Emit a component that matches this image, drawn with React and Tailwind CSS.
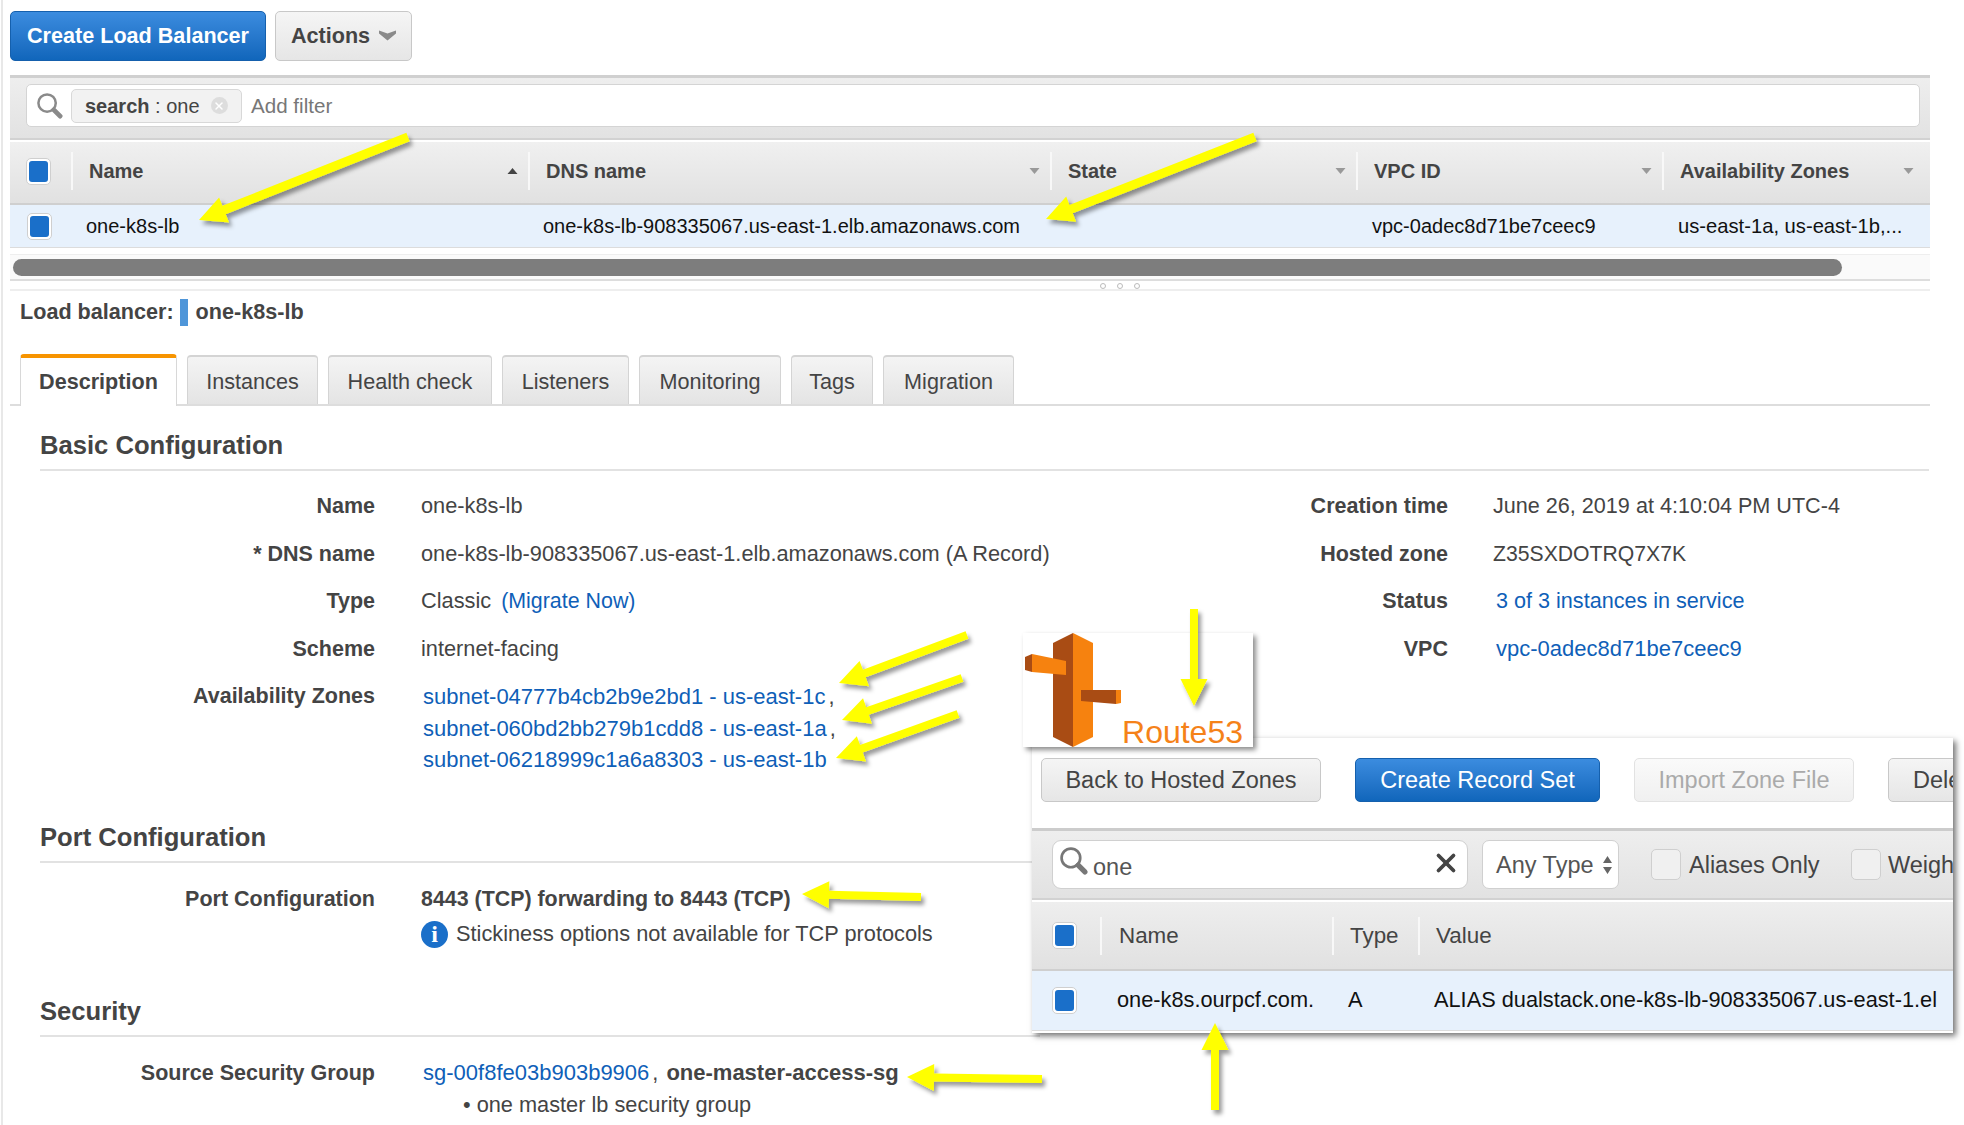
import { X } from 'lucide-react'

const font = { fontFamily: '"Liberation Sans", Arial, sans-serif' }

function Check() {
  return (
    <span className="flex h-[27px] w-[25px] shrink-0 items-center justify-center rounded-[5px] border border-[#cfcfcf] bg-white">
      <span className="h-[21px] w-[19px] rounded-[3px] bg-[#1a6fc9]" />
    </span>
  )
}

function Caret({ up, dark }) {
  return (
    <svg width="11" height="8" viewBox="0 0 11 8" className="shrink-0">
      <path d={up ? 'M5.5 1 10.5 7H.5z' : 'M.5 1h10l-5 6z'} fill={dark ? '#444' : '#999'} />
    </svg>
  )
}

function Magnifier({ size, color = '#8a8a8a' }) {
  return (
    <svg width={size} height={size} viewBox="0 0 28 28" className="shrink-0">
      <circle cx="11.5" cy="11.5" r="9" fill="none" stroke={color} strokeWidth="2.6" />
      <path d="M18.5 18.5 25 25" stroke={color} strokeWidth="5" strokeLinecap="round" />
    </svg>
  )
}

const columns = [
  { label: 'Name', w: 'w-[457px]', caret: 'up' },
  { label: 'DNS name', w: 'w-[522px]' },
  { label: 'State', w: 'w-[306px]' },
  { label: 'VPC ID', w: 'w-[306px]' },
  { label: 'Availability Zones', w: 'w-[262px]' },
]

function Toolbar() {
  return (
    <div className="flex gap-[9px]">
      <button className="h-[50px] w-[256px] rounded-[5px] border border-[#1560ad] bg-linear-to-b from-[#3b8cdf] to-[#1066bb] pt-[1px] text-[21.6px] font-bold text-white">
        Create Load Balancer
      </button>
      <button className="flex h-[50px] w-[137px] items-center justify-center gap-[9px] rounded-[5px] border border-[#c8c8c8] bg-linear-to-b from-[#f5f5f5] to-[#e6e6e6] pt-[1px] text-[21.6px] font-bold text-[#444]">
        Actions
        <svg width="17" height="11" viewBox="0 0 17 11" className="mb-[3px]">
          <path d="M0 .5 8.5 3.5 17 .5V3.5L8.5 10.5 0 3.5z" fill="#8a8a8a" />
        </svg>
      </button>
    </div>
  )
}

function FilterBar() {
  return (
    <div className="mt-[14px] h-[65px] border-t-[3px] border-b-[2px] border-t-[#d0d0d0] border-b-[#d2d2d2] bg-linear-to-b from-[#eeeeee] to-[#e2e2e2] px-[16px] pt-[6px]">
      <div className="flex h-[43px] w-[1894px] items-center rounded-[5px] border border-[#d4d4d4] bg-white pl-[9px]">
        <Magnifier size={27} />
        <span className="ml-[8px] flex h-[34px] w-[171px] items-center rounded-[5px] border border-[#d8d8d8] bg-[#f2f2f2] pl-[13px] text-[20px] text-[#444]">
          <b>search</b>&nbsp;: one
          <span className="ml-[11px] flex h-[17px] w-[17px] items-center justify-center rounded-full bg-[#dddddd]">
            <X className="h-[12px] w-[12px] text-white" strokeWidth={3} />
          </span>
        </span>
        <span className="ml-[9px] mt-[1px] text-[20.6px] text-[#777]">Add filter</span>
      </div>
    </div>
  )
}

function LbTable() {
  return (
    <div>
      <div className="flex h-[65px] items-center border-t-[2px] border-b-[2px] border-t-white border-b-[#cfcfcf] bg-linear-to-b from-[#f0f0f0] to-[#e1e1e1] pb-[3px] pl-[16px] text-[20px] font-bold text-[#444]">
        <span className="w-[45px]"><Check /></span>
        {columns.map(c => (
          <div key={c.label} className={`flex h-[38px] ${c.w} shrink-0 items-center justify-between border-l-2 border-[#f8f8f8] pl-[16px] pr-[10px]`}>
            {c.label}
            <Caret up={c.caret === 'up'} dark={c.caret === 'up'} />
          </div>
        ))}
      </div>
      <div className="flex h-[43px] items-center border-b border-[#dcdcdc] bg-[#e7f1fc] pl-[17px] text-[20px] text-[#111]">
        <span className="w-[59px]"><Check /></span>
        <span className="w-[457px]">one-k8s-lb</span>
        <span className="w-[829px]">one-k8s-lb-908335067.us-east-1.elb.amazonaws.com</span>
        <span className="w-[306px]">vpc-0adec8d71be7ceec9</span>
        <span className="text-[20.2px]">us-east-1a, us-east-1b,...</span>
      </div>
      <div className="mt-[6px] h-[27px] border-t border-b-2 border-t-[#eeeeee] border-b-[#dddddd] bg-[#fafafa] pl-[3px] pt-[4px]">
        <div className="h-[17px] w-[1829px] rounded-full bg-[#7d7d7d]" />
      </div>
      <div className="flex h-[10px] items-end gap-[11px] border-b-2 border-[#eeeeee] pl-[1090px]">
        {[0, 1, 2].map(i => <span key={i} className="h-[6px] w-[6px] rounded-full border border-[#bbbbbb]" />)}
      </div>
    </div>
  )
}

const tabs = [
  ['Instances', 'w-[131px]'],
  ['Health check', 'w-[164px]'],
  ['Listeners', 'w-[127px]'],
  ['Monitoring', 'w-[142px]'],
  ['Tags', 'w-[82px]'],
  ['Migration', 'w-[131px]'],
]

function Tabs() {
  return (
    <div className="mt-[27px] flex h-[52px] items-end gap-[10px] border-b-2 border-[#dddddd] pl-[10px]">
      <div className="-mb-[2px] flex h-[52px] w-[157px] items-center justify-center rounded-t-[4px] border-x border-t-[4px] border-x-[#d8d8d8] border-t-[#f79400] bg-white pt-[1px] text-[21.6px] font-bold text-[#444]">
        Description
      </div>
      {tabs.map(([t, w]) => (
        <div key={t} className={`flex h-[49px] ${w} items-center justify-center rounded-t-[4px] border-x border-t-2 border-[#d4d4d4] bg-linear-to-b from-[#f4f4f4] to-[#e4e4e4] pt-[3px] text-[21.6px] text-[#444]`}>
          {t}
        </div>
      ))}
    </div>
  )
}

function Section({ title, className, lineW = 'w-[1889px]' }) {
  return (
    <div className={className}>
      <h2 className="pl-[30px] text-[25.6px] leading-[30px] font-bold text-[#444]">{title}</h2>
      <div className={`ml-[30px] mt-[9px] h-[2px] ${lineW} bg-[#e2e2e2]`} />
    </div>
  )
}

function Row({ label, children, labelW = 'w-[365px]', gap = 'ml-[46px]', h = 'h-[47.6px]' }) {
  return (
    <div className={`flex ${h} items-start text-[21.75px] leading-[30px]`}>
      <div className={`${labelW} shrink-0 text-right text-[21.5px] font-bold text-[#444]`}>{label}</div>
      <div className={`${gap} text-[#444]`}>{children}</div>
    </div>
  )
}

const A = ({ children, size = 'text-[22px]' }) => <span className={`${size} text-[#0f5fb8]`}>{children}</span>

function Details() {
  return (
    <div>
      <div className="mt-[6px] flex h-[30px] items-center pl-[10px] text-[21.6px] font-bold text-[#444]">
        Load balancer:
        <span className="ml-[6px] mr-[8px] h-[27px] w-[8px] bg-[#4f96d9]" />
        one-k8s-lb
      </div>
      <Tabs />
      <Section title="Basic Configuration" className="mt-[24px]" />
      <div className="mt-[20px] flex">
        <div className="w-[1230px] shrink-0">
          <Row label="Name">one-k8s-lb</Row>
          <Row label="* DNS name">one-k8s-lb-908335067.us-east-1.elb.amazonaws.com (A Record)</Row>
          <Row label="Type">Classic <span className="ml-[4px]"><A size="text-[21.4px]">(Migrate Now)</A></span></Row>
          <Row label="Scheme">internet-facing</Row>
          <Row label="Availability Zones" h="h-[110px]" gap="ml-[48px]">
            <div className="leading-[31.3px]">
              <div><A>subnet-04777b4cb2b9e2bd1 - us-east-1c</A><span className="ml-[3px]">,</span></div>
              <div><A>subnet-060bd2bb279b1cdd8 - us-east-1a</A><span className="ml-[3px]">,</span></div>
              <div><A>subnet-06218999c1a6a8303 - us-east-1b</A></div>
            </div>
          </Row>
        </div>
        <div>
          <Row label="Creation time" labelW="w-[208px]" gap="ml-[45px]"><span className="text-[21.6px]">June 26, 2019 at 4:10:04 PM UTC-4</span></Row>
          <Row label="Hosted zone" labelW="w-[208px]" gap="ml-[45px]"><span className="text-[21.2px]">Z35SXDOTRQ7X7K</span></Row>
          <Row label="Status" labelW="w-[208px]" gap="ml-[48px]"><A size="text-[21.6px]">3 of 3 instances in service</A></Row>
          <Row label="VPC" labelW="w-[208px]" gap="ml-[48px]"><A>vpc-0adec8d71be7ceec9</A></Row>
        </div>
      </div>
      <Section title="Port Configuration" className="mt-[31px]" lineW="w-[1000px]" />
      <div className="mt-[21px]">
        <Row label="Port Configuration" h="h-[35px]"><b className="text-[21.4px]">8443 (TCP) forwarding to 8443 (TCP)</b></Row>
        <div className="ml-[411px] flex items-center gap-[8px] text-[21.75px] leading-[30px] text-[#444]">
          <span style={{ fontFamily: '"Liberation Serif", serif' }} className="flex h-[27px] w-[27px] items-center justify-center rounded-full bg-[#1a6fc9] text-[24px] font-bold text-white">i</span>
          Stickiness options not available for TCP protocols
        </div>
      </div>
      <Section title="Security" className="mt-[47px]" lineW="w-[1000px]" />
      <div className="mt-[21px]">
        <Row label="Source Security Group" h="h-[32px]" gap="ml-[48px]">
          <A>sg-00f8fe03b903b9906</A><span className="ml-[3px] mr-[8px]">,</span><b className="text-[22px]">one-master-access-sg</b>
        </Row>
        <div className="ml-[453px] text-[21.75px] leading-[30px] text-[#444]">• one master lb security group</div>
      </div>
    </div>
  )
}

function Route53Logo() {
  return (
    <div className="absolute left-[1023px] top-[633px] h-[114px] w-[230px] bg-white shadow-[3px_3px_5px_rgba(0,0,0,0.45)]">
      <svg width="110" height="114" viewBox="1023 633 110 114" className="absolute left-0 top-0">
        <path d="M1073 633 1053 643V737L1073 747z" fill="#a94c14" />
        <path d="M1073 633 1093 643V737L1073 747z" fill="#f6820f" />
        <path d="M1025 657 1032 654V672L1025 670z" fill="#a94c14" />
        <path d="M1032 654 1066 661V675L1032 672z" fill="#f6820f" />
        <path d="M1081 690H1116V704L1081 701z" fill="#a94c14" />
        <path d="M1116 690H1121V703L1116 704z" fill="#f6820f" />
      </svg>
      <span className="absolute bottom-[-3px] right-[10px] text-[32px] leading-[36px] text-[#f58219]">Route53</span>
    </div>
  )
}

function Route53Panel() {
  return (
    <div className="absolute left-[1032px] top-[738px] h-[295px] w-[921px] overflow-hidden bg-white shadow-[3px_3px_6px_rgba(0,0,0,0.55)]">
      <div className="flex h-[90px] items-start gap-[34px] pl-[9px] pt-[20px] text-[23.5px]">
        <button className="h-[44px] w-[280px] shrink-0 rounded-[5px] border border-[#c8c8c8] bg-linear-to-b from-[#f5f5f5] to-[#e6e6e6] pt-[2px] text-[#444]">Back to Hosted Zones</button>
        <button className="h-[44px] w-[245px] shrink-0 rounded-[5px] border border-[#1560ad] bg-linear-to-b from-[#3b8cdf] to-[#1066bb] pt-[2px] text-white">Create Record Set</button>
        <button className="h-[44px] w-[220px] shrink-0 rounded-[5px] border border-[#e2e2e2] bg-linear-to-b from-[#fafafa] to-[#f0f0f0] pt-[2px] text-[#aaaaaa]">Import Zone File</button>
        <button className="h-[44px] w-[120px] shrink-0 rounded-[5px] border border-[#c8c8c8] bg-linear-to-b from-[#f5f5f5] to-[#e6e6e6] pl-[24px] pt-[2px] text-left text-[#444]">Dele</button>
      </div>
      <div className="flex h-[72px] items-center border-t-[3px] border-b-[2px] border-t-[#cccccc] border-b-[#d2d2d2] bg-linear-to-b from-[#eeeeee] to-[#e2e2e2] pl-[20px] text-[23.5px] text-[#444]">
        <div className="flex h-[49px] w-[416px] shrink-0 items-center rounded-[9px] border border-[#d0d0d0] bg-white pl-[6px]">
          <span className="mb-[8px]"><Magnifier size={29} color="#777" /></span>
          <span className="ml-[5px] mt-[6px] text-[#555]">one</span>
          <X className="mb-[4px] ml-auto mr-[6px] h-[30px] w-[30px] text-[#444]" strokeWidth={3} />
        </div>
        <div className="ml-[14px] flex h-[49px] w-[137px] shrink-0 items-center justify-between rounded-[7px] border border-[#d0d0d0] bg-white pl-[13px] pr-[5px] text-[#555]">
          <span className="mt-[3px]">Any Type</span>
          <svg width="11" height="20" viewBox="0 0 11 20"><path d="M5.5 1 10 8H1zM5.5 19 10 12H1z" fill="#666" /></svg>
        </div>
        <span className="ml-[32px] h-[31px] w-[30px] shrink-0 rounded-[5px] border border-[#cfcfcf] bg-[#f0f0f0]" />
        <span className="ml-[8px] mt-[2px] w-[162px] shrink-0 whitespace-nowrap">Aliases Only</span>
        <span className="h-[31px] w-[30px] shrink-0 rounded-[5px] border border-[#cfcfcf] bg-[#f0f0f0]" />
        <span className="ml-[7px] mt-[2px] whitespace-nowrap">Weigh</span>
      </div>
      <div className="flex h-[71px] items-center border-t-[2px] border-b-[2px] border-t-white border-b-[#cfcfcf] bg-linear-to-b from-[#eeeeee] to-[#e1e1e1] pl-[20px] text-[22.4px] text-[#444]">
        <span className="w-[48px]"><Check /></span>
        <span className="flex h-[38px] w-[232px] items-center border-l-2 border-[#f8f8f8] pl-[17px]">Name</span>
        <span className="flex h-[38px] w-[86px] items-center border-l-2 border-[#f8f8f8] pl-[16px]">Type</span>
        <span className="flex h-[38px] items-center border-l-2 border-[#f8f8f8] pl-[16px]">Value</span>
      </div>
      <div className="flex h-[60px] items-center whitespace-nowrap border-b border-[#dcdcdc] bg-[#e7f1fc] pl-[20px] text-[21.75px] text-[#111]">
        <span className="w-[65px] shrink-0"><Check /></span>
        <span className="w-[231px] shrink-0">one-k8s.ourpcf.com.</span>
        <span className="w-[86px] shrink-0">A</span>
        <span>ALIAS dualstack.one-k8s-lb-908335067.us-east-1.el</span>
      </div>
    </div>
  )
}

// arrows as tail -> tip, page coordinates
const arrows = [
  [408, 137, 199, 220, 9],
  [1255, 137, 1046, 219, 9],
  [1194, 609, 1194, 706, 8],
  [967, 635, 839, 683, 8],
  [962, 678, 842, 720, 8],
  [958, 714, 836, 758, 8],
  [921, 897, 802, 894, 8],
  [1042, 1079, 907, 1077, 8],
  [1215, 1110, 1215, 1023, 8],
]

function arrowPoints([x1, y1, x2, y2, w]) {
  const len = Math.hypot(x2 - x1, y2 - y1)
  const ux = (x2 - x1) / len
  const uy = (y2 - y1) / len
  const nx = -uy
  const ny = ux
  const head = 27
  const hw = 13.5
  const bx = x2 - ux * head
  const by = y2 - uy * head
  const p = [
    [x1 + nx * w / 2, y1 + ny * w / 2],
    [bx + nx * w / 2, by + ny * w / 2],
    [bx + nx * hw, by + ny * hw],
    [x2, y2],
    [bx - nx * hw, by - ny * hw],
    [bx - nx * w / 2, by - ny * w / 2],
    [x1 - nx * w / 2, y1 - ny * w / 2],
  ]
  return p.map(q => q.join(',')).join(' ')
}

function Arrows() {
  return (
    <svg width="1964" height="1125" className="pointer-events-none absolute left-0 top-0">
      <defs>
        <filter id="arrowShadow" x="-30%" y="-30%" width="160%" height="160%">
          <feDropShadow dx="3" dy="4" stdDeviation="2" floodColor="#000" floodOpacity="0.4" />
        </filter>
      </defs>
      {arrows.map((a, i) => (
        <polygon key={i} points={arrowPoints(a)} fill="#ffff00" filter="url(#arrowShadow)" />
      ))}
    </svg>
  )
}

export default function App() {
  return (
    <div style={font} className="relative h-[1125px] w-[1964px] overflow-hidden bg-white">
      <div className="ml-[1px] h-full w-[1929px] border-l-2 border-[#e8e8e8] pl-[7px] pt-[11px]">
        <Toolbar />
        <FilterBar />
        <LbTable />
        <Details />
      </div>
      <Route53Panel />
      <Route53Logo />
      <Arrows />
    </div>
  )
}
